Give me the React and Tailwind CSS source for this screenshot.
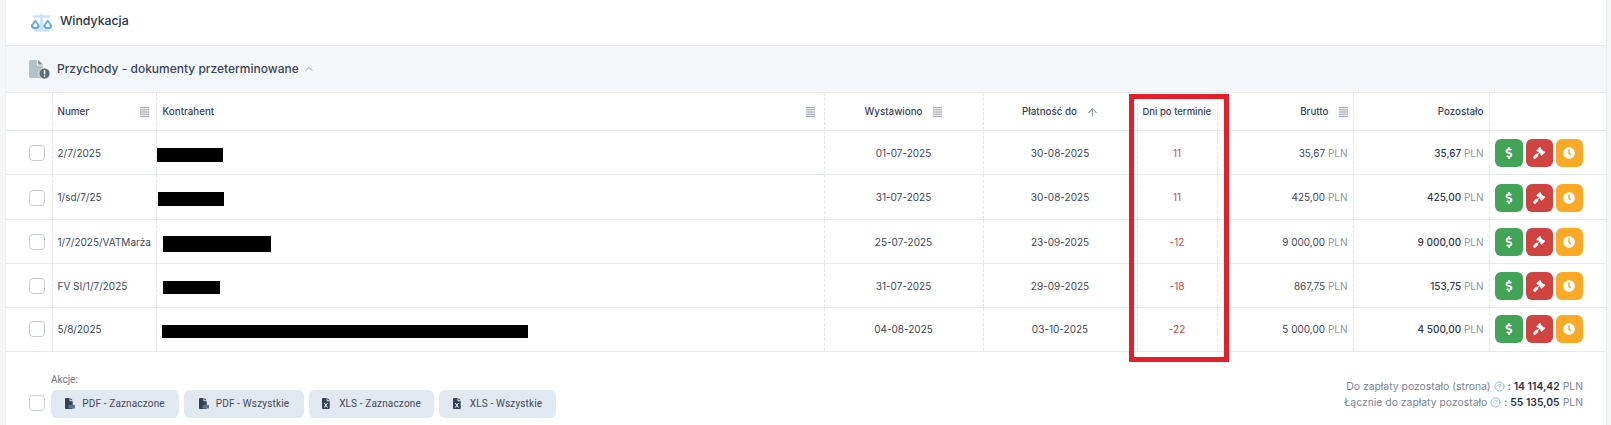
import React from "react";
import { FaDollarSign, FaGavel, FaClock } from "react-icons/fa";
import { ChevronUp, ArrowUp, CircleHelp } from "lucide-react";

const rows = [
  { n: "2/7/2025", w: "01-07-2025", p: "30-08-2025", d: "11", b: "35,67", r: "35,67", h: "h-[44px] [&>td]:pt-[2px]", red: "ml-[0px] w-[66px] h-[14px] top-[2px]" },
  { n: "1/sd/7/25", w: "31-07-2025", p: "30-08-2025", d: "11", b: "425,00", r: "425,00", h: "h-[45px] [&>td]:pt-[2px]", red: "ml-[1px] w-[66px] h-[14px] top-[1px]" },
  { n: "1/7/2025/VATMarża", w: "25-07-2025", p: "23-09-2025", d: "-12", b: "9 000,00", r: "9 000,00", h: "h-[44px] [&>td]:pt-[2px]", red: "ml-[6px] w-[108px] h-[16px] top-[2px]" },
  { n: "FV SI/1/7/2025", w: "31-07-2025", p: "29-09-2025", d: "-18", b: "867,75", r: "153,75", h: "h-[44px] [&>td]:pt-[2px]", red: "ml-[6px] w-[57px] h-[13px] top-[1px]" },
  { n: "5/8/2025", w: "04-08-2025", p: "03-10-2025", d: "-22", b: "5 000,00", r: "4 500,00", h: "h-[44px] [&>td]:pt-0", red: "ml-[5px] w-[366px] h-[13px] top-[2px]" },
];

function Lines() {
  return (
    <svg width="11" height="10" viewBox="0 0 11 10" className="shrink-0" fill="#a3aab4">
      <rect x="1" y="0" width="9" height="1.2" />
      <rect x="1" y="2.2" width="9" height="1.2" />
      <rect x="1" y="4.4" width="9" height="1.2" />
      <rect x="1" y="6.6" width="9" height="1.2" />
      <rect x="1" y="8.8" width="9" height="1.2" />
    </svg>
  );
}

function Check({ className = "" }) {
  return <span className={"block w-[16px] h-[16px] rounded-[4px] border border-[#c9ced6] bg-white " + className} />;
}

function Scale() {
  return (
    <svg width="23" height="18" viewBox="0 0 24 18">
      <rect x="10.500" y="0" width="3" height="17" fill="#c9e2f9" />
      <rect x="3" y="1" width="18" height="2.500" fill="#c9e2f9" />
      <rect x="4" y="15.500" width="16" height="2.500" fill="#c9e2f9" />
      <path d="M5.500 5 L10.200 11.500 A4.700 3.800 0 0 1 0.800 11.500 Z M5.500 8.200 L3.200 11.500 A2.300 1.700 0 0 0 7.800 11.500 Z" fill="#62a9ee" fillRule="evenodd" />
      <path d="M18.500 5 L23.200 11.500 A4.700 3.800 0 0 1 13.800 11.500 Z M18.500 8.200 L16.200 11.500 A2.300 1.700 0 0 0 20.800 11.500 Z" fill="#62a9ee" fillRule="evenodd" />
    </svg>
  );
}

function DocAlert() {
  return (
    <svg width="21" height="19" viewBox="0 0 21 19">
      <path d="M1.500 0H8V5.500H14V18H1.500A1.500 1.500 0 0 1 0 16.500V1.500A1.500 1.500 0 0 1 1.500 0Z" fill="#b5bfca" />
      <path d="M9 0L14 4.500H9Z" fill="#7e8b99" />
      <circle cx="15.500" cy="13.500" r="5.500" fill="#5f6b7a" stroke="#f4f7fa" strokeWidth="0.800" />
      <rect x="14.800" y="10.300" width="1.500" height="4" rx="0.500" fill="#fff" />
      <rect x="14.800" y="15.200" width="1.500" height="1.500" rx="0.500" fill="#fff" />
    </svg>
  );
}

function FileIcon({ label }) {
  return (
    <svg width="10" height="11" viewBox="0 0 11 12" className="shrink-0">
      <path d="M0 1A1 1 0 0 1 1 0H5V3.500H8.500V11A1 1 0 0 1 7.500 12H1A1 1 0 0 1 0 11Z" fill="#334155" />
      <path d="M6 0L8.500 2.500H6Z" fill="#334155" />
      {label === "pdf" ? (
        <rect x="4" y="7.500" width="7" height="4" fill="#64748b" />
      ) : (
        <path d="M2.500 5.500L6 10.500M6 5.500L2.500 10.500" stroke="#fff" strokeWidth="1.100" />
      )}
    </svg>
  );
}

function Action({ label, kind, w }) {
  return (
    <button className={"h-[28px] rounded-[6px] bg-[#e2e8ef] flex items-center justify-center gap-[7px] text-[10px] text-[#3e4a5a] tracking-[0.15px] font-['Roboto',sans-serif] " + w}>
      <FileIcon label={kind} />
      {label}
    </button>
  );
}

function Btn({ color, w, children }) {
  return (
    <span className={"h-[28px] rounded-[6px] flex items-center justify-center text-white " + w + " " + color}>{children}</span>
  );
}

const th = "border-r border-dashed border-[#e3e7ec] font-medium text-[9.800px] text-[#3a4353] px-[5px] pt-[2px] align-middle";
const td = "border-r border-dashed border-[#e3e7ec] text-[10px] text-[#3f4856] px-[5px] align-middle";

export default function App() {
  return (
    <div className="relative bg-[#f5f6f8] h-[425px] overflow-hidden pl-[5px] pr-[4px] font-['Inter',sans-serif]">
      <div className="bg-white h-full border-x border-[#eceef1]">
        <div className="h-[46px] flex items-center pl-[24px] gap-[7px] border-b border-[#e6eaee]">
          <Scale />
          <span className="text-[12.300px] font-medium text-[#2b3445] relative -top-[1px]">Windykacja</span>
        </div>
        <div className="h-[47px] bg-[#f4f7fa] flex items-center pl-[23px] gap-[7px] border-b border-[#e6eaee]">
          <DocAlert />
          <span className="text-[12px] font-medium text-[#3a4455] -mr-[3px]">Przychody - dokumenty przeterminowane</span>
          <ChevronUp size={12} color="#8f9baa" />
        </div>
        <table className="w-full table-fixed border-collapse">
          <colgroup>
            <col className="w-[46px]" />
            <col className="w-[104px]" />
            <col className="w-[668px]" />
            <col className="w-[159px]" />
            <col className="w-[154px]" />
            <col className="w-[80px]" />
            <col className="w-[136px]" />
            <col className="w-[136px]" />
            <col />
          </colgroup>
          <thead>
            <tr className="h-[37px] border-b border-[#e6eaee]">
              <th className={th}></th>
              <th className={th}>
                <div className="flex items-center justify-between pr-[1px]"><span>Numer</span><Lines /></div>
              </th>
              <th className={th}>
                <div className="flex items-center justify-between pl-[1px] pr-[3px]"><span>Kontrahent</span><Lines /></div>
              </th>
              <th className={th}>
                <div className="flex items-center justify-center gap-[9px]"><span>Wystawiono</span><Lines /></div>
              </th>
              <th className={th}>
                <div className="flex items-center justify-center gap-[9px] pl-[1px]"><span>Płatność do</span><ArrowUp size={13} color="#9ca3af" /></div>
              </th>
              <th className={th}>
                <div className="text-center whitespace-nowrap pr-[2px] text-[9.500px]">Dni po terminie</div>
              </th>
              <th className={th + " !pr-[4px]"}>
                <div className="flex items-center justify-end gap-[9px]"><span>Brutto</span><Lines /></div>
              </th>
              <th className={th}>
                <div className="text-right">Pozostało</div>
              </th>
              <th></th>
            </tr>
          </thead>
          <tbody>
            {rows.map((x) => (
              <tr key={x.n} className={x.h + " border-b border-[#e6eaee]"}>
                <td className={td}><Check className="ml-[18px]" /></td>
                <td className={td}>{x.n}</td>
                <td className={td + " !px-0"}><span className={"block relative bg-black " + x.red} /></td>
                <td className={td + " text-center"}>{x.w}</td>
                <td className={td + " text-center"}>{x.p}</td>
                <td className={td + " text-center text-[#c9474a]"}>{x.d}</td>
                <td className={td + " text-right"}>{x.b} <span className="text-[#8b96a5]">PLN</span></td>
                <td className={td + " text-right font-medium text-[#333c4a]"}>{x.r} <span className="font-normal text-[#8b96a5]">PLN</span></td>
                <td className="pl-[5px]">
                  <div className="flex gap-[3px]">
                    <Btn color="bg-[#43a458]" w="w-[28px]"><FaDollarSign size={12} /></Btn>
                    <Btn color="bg-[#cf4440]" w="w-[27px]"><FaGavel size={12} /></Btn>
                    <Btn color="bg-[#fca926]" w="w-[27px]"><FaClock size={12} /></Btn>
                  </div>
                </td>
              </tr>
            ))}
          </tbody>
        </table>
        <div className="flex justify-between items-end h-[74px] pl-[23px] pr-[23px] pb-[8px]">
          <div className="flex items-end gap-[6px]">
            <Check className="mb-[7px]" />
            <div>
              <div className="text-[10px] text-[#6b7686] mb-[3px] font-['Roboto',sans-serif]">Akcje:</div>
              <div className="flex gap-[5px]">
                <Action label="PDF - Zaznaczone" kind="pdf" w="w-[128px]" />
                <Action label="PDF - Wszystkie" kind="pdf" w="w-[120px]" />
                <Action label="XLS - Zaznaczone" kind="xls" w="w-[125px]" />
                <Action label="XLS - Wszystkie" kind="xls" w="w-[117px]" />
              </div>
            </div>
          </div>
          <div className="text-right text-[10.400px] leading-[16px] text-[#7a8594] mb-[7px]">
            <div className="flex items-center justify-end gap-[3px]">
              <span>Do zapłaty pozostało (strona)</span>
              <CircleHelp size={11} color="#8fb5e6" />
              <span className="text-[#333c4a]">:</span>
              <span className="font-semibold text-[#2b3445]">14 114,42</span>
              <span>PLN</span>
            </div>
            <div className="flex items-center justify-end gap-[3px]">
              <span>Łącznie do zapłaty pozostało</span>
              <CircleHelp size={11} color="#8fb5e6" />
              <span className="text-[#333c4a]">:</span>
              <span className="font-semibold text-[#2b3445]">55 135,05</span>
              <span>PLN</span>
            </div>
          </div>
        </div>
      </div>
      <div className="absolute left-[1129px] top-[94px] w-[100px] h-[268px] border-[5px] border-[#e61e2a]" />
    </div>
  );
}
